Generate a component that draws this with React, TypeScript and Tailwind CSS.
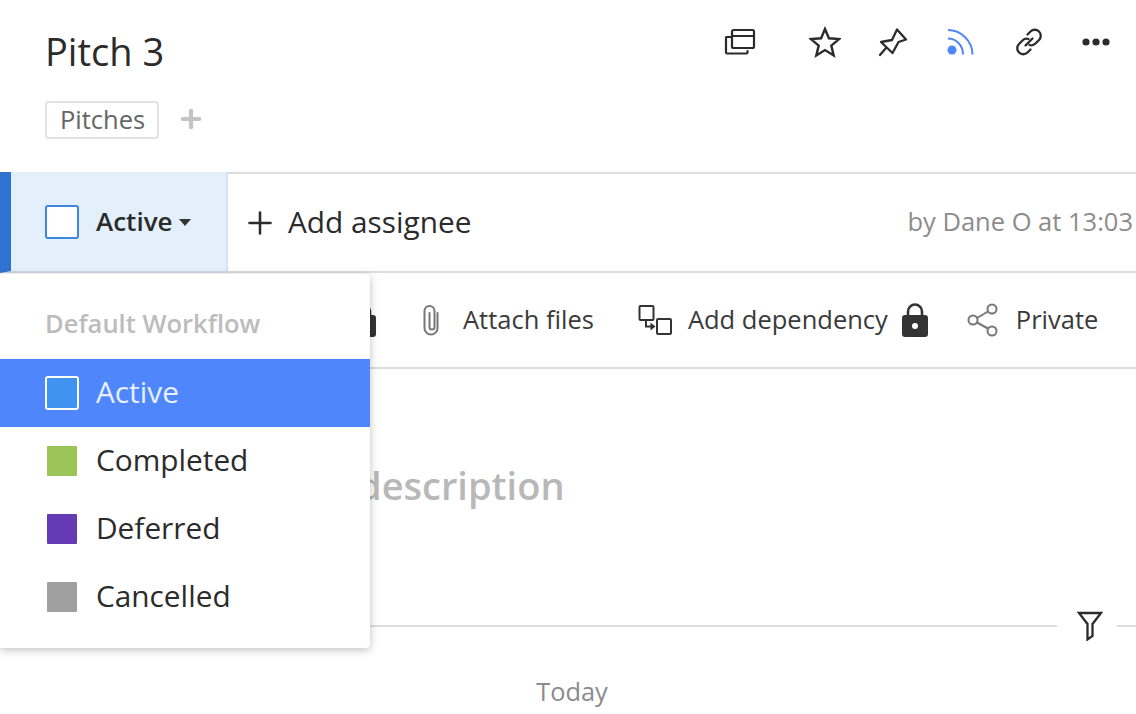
import { Plus } from "lucide-react";

function PanelsIcon() {
  return (
    <svg width="32" height="28" viewBox="0 0 32 28" fill="none" stroke="#2b2b2b" strokeWidth="2.2" strokeLinejoin="round" strokeLinecap="round">
      <rect x="8" y="2" width="22" height="18" rx="1.5" />
      <path d="M8 8h22" />
      <path d="M8 9H2.5A1 1 0 0 0 2 10v14.5a1 1 0 0 0 1 1h19.500a1 1 0 0 0 1-1V23" />
    </svg>
  );
}

function StarIcon() {
  return (
    <svg width="32" height="32" viewBox="0 0 32 32" fill="none" stroke="#2b2b2b" strokeWidth="2.4" strokeLinejoin="miter">
      <path d="M16 3l3.900 9.300 10.100.8-7.700 6.500 2.400 9.800-8.700-5.300-8.700 5.300 2.400-9.800L2 13.100l10.100-.8z" />
    </svg>
  );
}

function PinIcon() {
  return (
    <svg width="30" height="30" viewBox="0 0 30 30" fill="none" stroke="#2b2b2b" strokeWidth="2.300" strokeLinejoin="round" strokeLinecap="round">
      <path d="M19 2.500L28 12.500l-7.500 2.500-6 11L3 15l11-2z" />
      <path d="M8 21l-6 7" />
    </svg>
  );
}

function FeedIcon() {
  return (
    <svg width="28" height="28" viewBox="0 0 28 28" fill="none" stroke="#4f86f7" strokeWidth="2">
      <circle cx="6" cy="22" r="4.500" fill="#4f86f7" stroke="none" />
      <path d="M2 10.500c8 0 15 6.500 15 16" />
      <path d="M2 2c13 0 24.500 11 24.500 24.500" />
    </svg>
  );
}

function LinkIcon() {
  return (
    <svg width="28" height="28" viewBox="0 0 28 28" fill="none" stroke="#2b2b2b" strokeWidth="2.300" strokeLinecap="round">
      <path d="M12.500 6.500l3-3a6 6 0 0 1 8.500 0 6 6 0 0 1 0 8.500l-3.500 3.500a6 6 0 0 1-6 1.500" />
      <path d="M15.500 21.500l-3 3a6 6 0 0 1-8.500 0 6 6 0 0 1 0-8.500l3.500-3.500a6 6 0 0 1 6-1.500" />
      <path d="M10.500 17.500l7-7" />
    </svg>
  );
}

function DotsIcon() {
  return (
    <svg width="30" height="10" viewBox="0 0 30 10" fill="#2b2b2b">
      <circle cx="5" cy="5" r="3.600" />
      <circle cx="15" cy="5" r="3.600" />
      <circle cx="25" cy="5" r="3.600" />
    </svg>
  );
}

function LockIcon() {
  return (
    <svg width="28" height="36" viewBox="0 0 28 36" fill="none">
      <path d="M7 15V9.500a7 7 0 0 1 14 0V15" stroke="#333333" strokeWidth="2.600" />
      <rect x="1" y="13" width="26" height="22" rx="3" fill="#333333" />
      <circle cx="14" cy="24" r="3" fill="#ffffff" />
    </svg>
  );
}

function ClipIcon() {
  return (
    <svg width="20" height="32" viewBox="0 0 20 32" fill="none" stroke="#777777" strokeWidth="2" strokeLinecap="round">
      <path d="M16.500 9v15a6.500 6.500 0 0 1-13 0V7a5 5 0 0 1 10 0v16a2.500 2.500 0 0 1-5 0V9" />
    </svg>
  );
}

function DependencyIcon() {
  return (
    <svg width="34" height="32" viewBox="0 0 34 32" fill="none" stroke="#333333" strokeWidth="2">
      <rect x="1.500" y="2" width="14" height="14" rx="1" />
      <rect x="19" y="15" width="14" height="15" rx="1" />
      <path d="M8 16v6.500h6" />
      <path d="M12.500 18.500l5 4-5 4z" fill="#333333" stroke="none" />
    </svg>
  );
}

function ShareIcon() {
  return (
    <svg width="32" height="34" viewBox="0 0 32 34" fill="none" stroke="#777777" strokeWidth="2">
      <circle cx="6" cy="17" r="4.500" />
      <circle cx="25" cy="6" r="4.500" />
      <circle cx="25" cy="28" r="4.500" />
      <path d="M10 15l11-6.500M10 19.500l11 6" />
    </svg>
  );
}

function FilterIcon() {
  return (
    <svg width="26" height="30" viewBox="0 0 26 30" fill="none" stroke="#2b2b2b" strokeWidth="2.300" strokeLinejoin="miter">
      <path d="M2 2h22l-8.500 11v12l-5 3.500V13z" />
    </svg>
  );
}

const statuses = [
  { name: "Active", selected: true, color: "bg-[#4093f0]" },
  { name: "Completed", selected: false, color: "bg-[#9bc558]" },
  { name: "Deferred", selected: false, color: "bg-[#653bb5]" },
  { name: "Cancelled", selected: false, color: "bg-[#a0a0a0]" },
];

function StatusMenu() {
  return (
    <div className="absolute left-0 top-[274px] z-10 w-[370px] h-[374px] pt-[33px] bg-white rounded-r shadow-[0_2px_8px_rgba(0,0,0,0.25)]">
      <div className="pl-[45px] h-[52px] text-[25.5px] leading-[32px] font-semibold text-[#bcbcbc]">Default Workflow</div>
      {statuses.map((s) => (
        <div
          key={s.name}
          className={`flex items-center h-[68px] pb-[2px] text-[29.8px] ${s.selected ? "bg-[#4f86fb] text-[#e6f0ff] pl-[45px]" : "text-[#2b2b2b] pl-[47px]"}`}
        >
          <span
            className={`${s.color} ${s.selected ? "w-[34px] h-[34px] mt-[2px] mr-[17px] border-2 border-white rounded-[3px]" : "w-[30px] h-[30px] mt-[2px] mr-[19px] rounded-[1px]"}`}
          />
          {s.name}
        </div>
      ))}
    </div>
  );
}

export default function App() {
  return (
    <div className="relative w-[1136px] h-[714px] overflow-hidden bg-white font-['Open_Sans',sans-serif] text-[#2b2b2b]">
      <StatusMenu />

      <header className="h-[172px] pl-[45px]">
        <div className="flex justify-between pr-[25px]">
          <h1 className="pt-[26px] text-[38px] leading-[50px] text-[#2b2b2b]">Pitch 3</h1>
          <div className="flex items-center h-[80px] pt-[4px]">
            <PanelsIcon />
            <span className="ml-[53px]"><StarIcon /></span>
            <span className="ml-[37px]"><PinIcon /></span>
            <span className="ml-[38px]"><FeedIcon /></span>
            <span className="ml-[41px]"><LinkIcon /></span>
            <span className="ml-[38px] flex"><DotsIcon /></span>
          </div>
        </div>
        <div className="flex items-center mt-[21px]">
          <span className="flex items-center h-[38px] pl-[13px] pr-[12px] pb-[2px] border-2 border-[#e2e2e2] rounded text-[25.5px] text-[#666666]">Pitches</span>
          <Plus className="ml-[18px] mb-[3px]" size={28} strokeWidth={3.600} color="#c4c4c4" />
        </div>
      </header>

      <section className="flex h-[101px] border-y-2 border-[#dddddd]">
        <div className="flex items-center w-[228px] -my-[2px] border-l-[11px] border-l-[#2f72d0] border-r-2 border-r-[#d3e3f3] bg-[#e3f0fb] border-b-2 border-b-[#cfdbe7]">
          <span className="ml-[34px] w-[34px] h-[34px] bg-white border-2 border-[#3f86e0] rounded-[3px]" />
          <span className="ml-[17px] text-[26px] font-semibold text-[#2b2b2b]">Active</span>
          <span className="ml-[6px] mt-[1px] border-x-[6px] border-x-transparent border-t-[7px] border-t-[#333333]" />
        </div>
        <div className="flex flex-1 items-center">
          <Plus className="ml-[14px]" size={36} strokeWidth={1.700} color="#2b2b2b" />
          <span className="ml-[10px] text-[29.8px]">Add assignee</span>
          <span className="ml-auto mr-[3px] mb-[2px] text-[25.5px] text-[#8c8c8c] whitespace-nowrap">by Dane O at 13:03</span>
        </div>
      </section>

      <section className="flex items-center h-[96px] border-b-2 border-[#dddddd] text-[25.5px] text-[#3a3a3a]">
        <span className="ml-[349px] flex"><LockIcon /></span>
        <span className="ml-[44px] flex"><ClipIcon /></span>
        <span className="ml-[22px] mb-[2px]">Attach files</span>
        <span className="ml-[44px] flex"><DependencyIcon /></span>
        <span className="ml-[16px] mb-[2px]">Add dependency</span>
        <span className="ml-[13px] flex"><LockIcon /></span>
        <span className="ml-[38px] flex"><ShareIcon /></span>
        <span className="ml-[17px] mb-[2px]">Private</span>
      </section>

      <div className="h-[256px] pl-[358px] pt-[88px] text-[38px] leading-[56px] font-semibold text-[#b8b8b8] whitespace-nowrap">
        description
      </div>

      <div className="flex items-center h-[2px]">
        <div className="w-[1057px] h-[2px] bg-[#dddddd]" />
        <span className="ml-[20px] flex"><FilterIcon /></span>
        <div className="ml-[14px] flex-1 h-[2px] bg-[#dddddd]" />
      </div>

      <div className="pt-[48px] text-center text-[25.4px] leading-[32px] text-[#8c8c8c] pl-[8px]">Today</div>
    </div>
  );
}
